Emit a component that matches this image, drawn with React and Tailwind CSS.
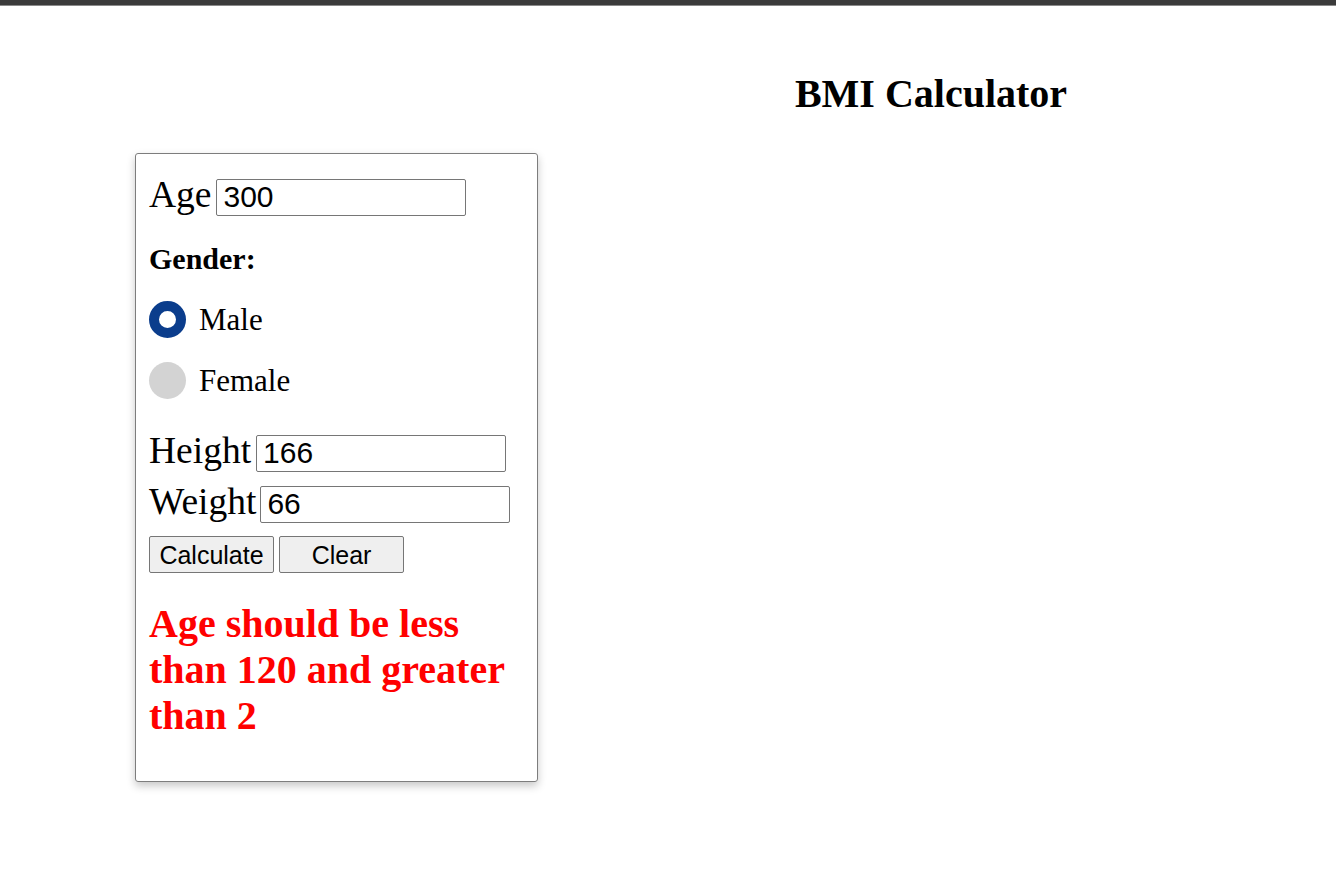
import React from "react";

export default function App() {
  const serif = { fontFamily: '"Liberation Serif", "Times New Roman", serif' };
  const sans = { fontFamily: '"Liberation Sans", Arial, sans-serif' };
  return (
    <div className="min-h-[871px] w-full bg-white text-black" style={serif}>
      <div className="h-[5px] bg-[#3b3b3b]" />
      <div className="h-px bg-[#8a8a8a]" />
      <div className="pl-[526px] mt-[65px] text-center">
        <h1 className="text-[40px] leading-[46px] font-bold">BMI Calculator</h1>
      </div>
      <div className="pl-[135px] mt-[36px]">
        <div className="w-[403px] border border-[#7d7d7d] rounded-[3px] shadow-[0_4px_8px_rgba(0,0,0,0.22)] px-[13px] pt-[19px] pb-[42px]">
          <div className="flex items-baseline">
            <span className="text-[37.5px] leading-[43px]">Age</span>
            <input
              defaultValue="300"
              className="ml-[5px] w-[250px] h-[37px] border border-[#767676] rounded-[2px] px-[6px] text-[30px] leading-[33px] outline-none"
              style={sans}
            />
          </div>
          <div className="mt-[25px] text-[30px] leading-[35px] font-bold">Gender:</div>
          <div className="mt-[25px] flex items-center h-[37px]">
            <span className="w-[37px] h-[37px] rounded-full border-[10px] border-[#0b3d8c] bg-white" />
            <span className="ml-[13px] text-[31px] leading-[35px]">Male</span>
          </div>
          <div className="mt-[24px] flex items-center h-[37px]">
            <span className="w-[37px] h-[37px] rounded-full bg-[#d3d3d3]" />
            <span className="ml-[13px] text-[31px] leading-[35px]">Female</span>
          </div>
          <div className="mt-[30px] flex items-baseline">
            <span className="text-[37.5px] leading-[43px]">Height</span>
            <input
              defaultValue="166"
              className="ml-[5px] w-[250px] h-[37px] border border-[#767676] rounded-[2px] px-[6px] text-[30px] leading-[33px] outline-none"
              style={sans}
            />
          </div>
          <div className="mt-[8px] flex items-baseline">
            <span className="text-[37.5px] leading-[43px]">Weight</span>
            <input
              defaultValue="66"
              className="ml-[4px] w-[250px] h-[37px] border border-[#767676] rounded-[2px] px-[6px] text-[30px] leading-[33px] outline-none"
              style={sans}
            />
          </div>
          <div className="mt-[13px] flex gap-[5px]">
            <button
              className="w-[125px] h-[37px] bg-[#efefef] border border-[#767676] rounded-[2px] text-[25px] leading-[28px]"
              style={sans}
            >
              Calculate
            </button>
            <button
              className="w-[125px] h-[37px] bg-[#efefef] border border-[#767676] rounded-[2px] text-[25px] leading-[28px]"
              style={sans}
            >
              Clear
            </button>
          </div>
          <div className="mt-[28px] text-[40px] leading-[46px] font-bold text-[#ff0000]">
            Age should be less than 120 and greater than 2
          </div>
        </div>
      </div>
    </div>
  );
}
